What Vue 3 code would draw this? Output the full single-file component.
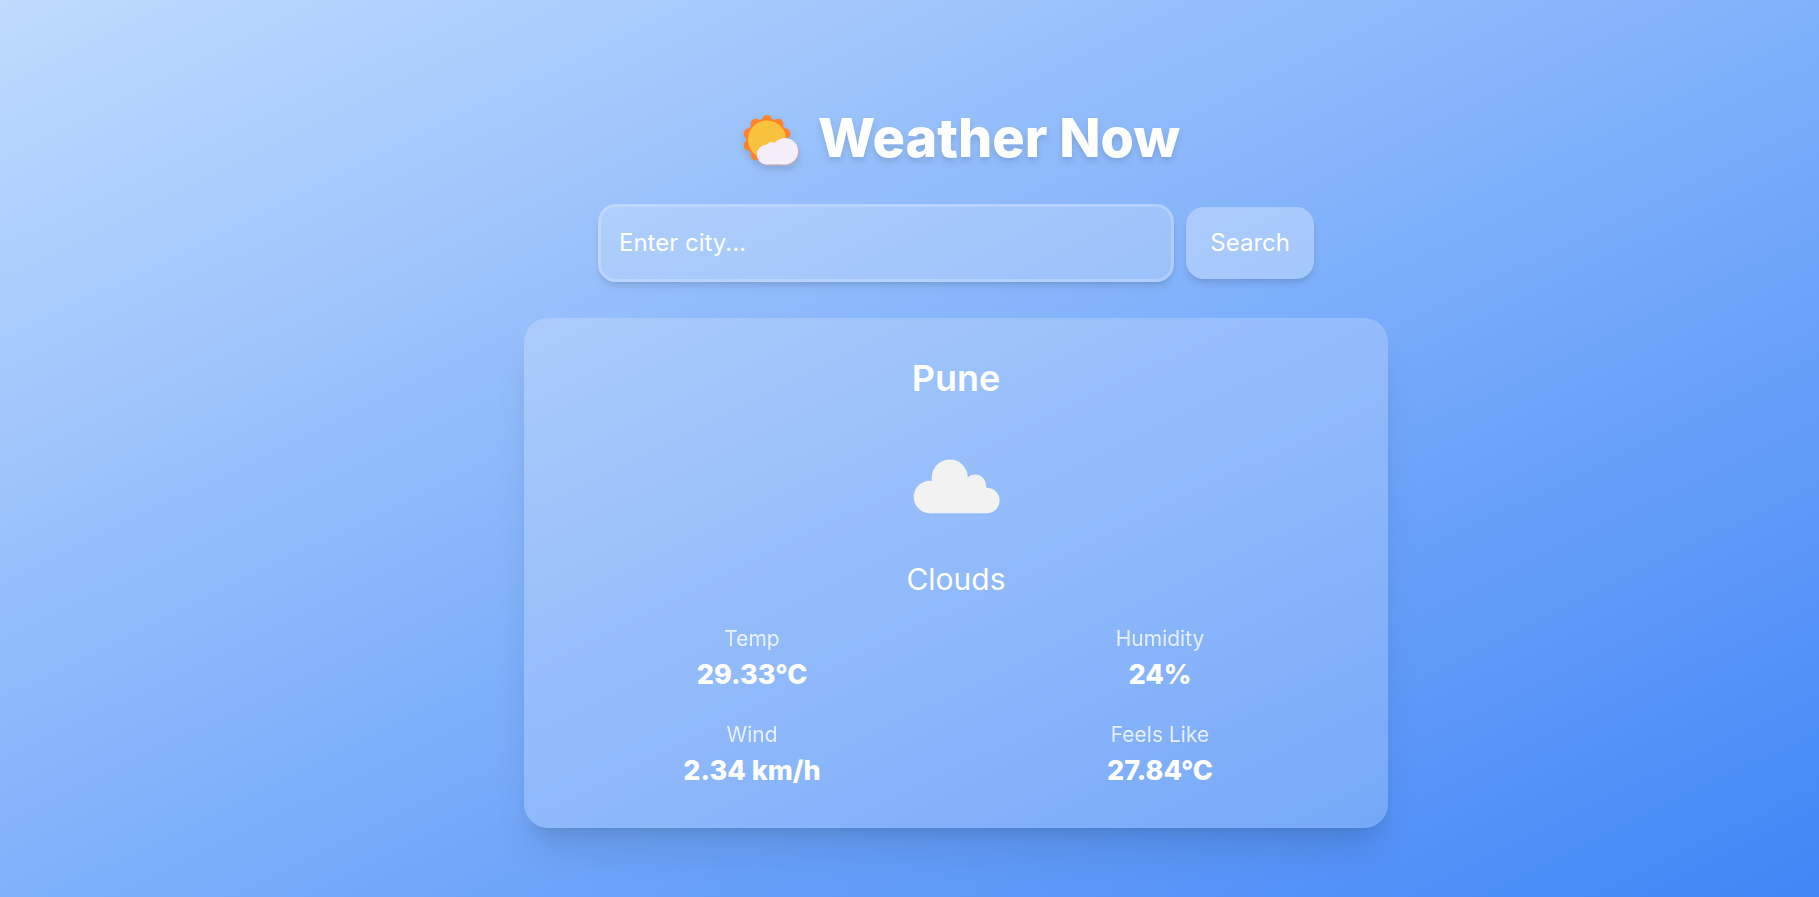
<script setup>
import { ref } from 'vue'

const city = ref('')
const weather = {
  city: 'Pune',
  condition: 'Clouds',
  stats: [
    { label: 'Temp', value: '29.33°C' },
    { label: 'Humidity', value: '24%' },
    { label: 'Wind', value: '2.34 km/h' },
    { label: 'Feels Like', value: '27.84°C' },
  ],
}
const rays = Array.from({ length: 10 }, (_, i) => i * 36)
</script>

<template>
  <main class="page">
    <h1 class="title">
      <svg class="logo" viewBox="0 0 70 60" aria-hidden="true">
        <g fill="#ff822d">
          <circle cx="35" cy="31.5" r="21" />
          <circle
            v-for="angle in rays"
            :key="angle"
            cx="35"
            cy="12.3"
            r="5.2"
            :transform="`rotate(${angle} 35 31.5)`"
          />
        </g>
        <circle cx="35" cy="31.5" r="19" fill="#f9c23c" />
        <g fill="#b8a9bd" transform="translate(0.8 0.8)">
          <circle cx="52.9" cy="43.5" r="13.6" />
          <circle cx="34.5" cy="47" r="10.1" />
          <rect x="34.5" y="43" width="18.400" height="14.1" />
        </g>
        <g fill="#f3eef8">
          <circle cx="52.9" cy="43.2" r="13.2" />
          <circle cx="34.5" cy="46.6" r="9.8" />
          <circle cx="39.6" cy="40.5" r="6.4" />
          <rect x="34.5" y="37" width="18.400" height="19.400" />
        </g>
      </svg>
      <span>Weather Now</span>
    </h1>

    <form class="search" @submit.prevent>
      <input v-model="city" class="field" type="text" aria-label="City" placeholder="Enter city..." />
      <button class="submit" type="submit">Search</button>
    </form>

    <section class="card">
      <h2 class="city">{{ weather.city }}</h2>
      <svg class="cloud" viewBox="0 0 150 150" role="img" aria-label="Clouds">
        <g fill="#f2f2f2">
          <circle cx="68.8" cy="69.5" r="18" />
          <circle cx="49" cy="89" r="16.3" />
          <circle cx="94.2" cy="77.200" r="10.7" />
          <circle cx="105.8" cy="92.5" r="12.8" />
          <rect x="49" y="79.7" width="57" height="25.6" />
          <rect x="50.8" y="69.5" width="36" height="14" />
          <rect x="84.5" y="76.5" width="20.4" height="8" />
        </g>
      </svg>
      <p class="condition">{{ weather.condition }}</p>
      <dl class="stats">
        <div v-for="stat in weather.stats" :key="stat.label">
          <dt>{{ stat.label }}</dt>
          <dd>{{ stat.value }}</dd>
        </div>
      </dl>
    </section>
  </main>
</template>

<style>
body {
  margin: 0;
}
</style>

<style scoped>
.page {
  box-sizing: border-box;
  min-height: 100vh;
  padding: 108px 0 69px 93px;
  display: flex;
  flex-direction: column;
  align-items: center;
  color: #fff;
  font-family: Inter, "Liberation Sans", sans-serif;
  background-image: linear-gradient(to bottom right, #bfdbfe, #3b82f6);
  background-size: calc(100% + 93px) calc(100% + 38px);
}

.title {
  margin: 0 0 36px;
  display: flex;
  align-items: center;
  gap: 16px;
  font-size: 54px;
  line-height: 60px;
  font-weight: 800;
  filter: drop-shadow(0 4px 3px rgba(0, 0, 0, 0.12));
}

.logo {
  width: 70px;
  height: 60px;
}

.search {
  width: 716px;
  max-width: 100%;
  margin-bottom: 36px;
  display: flex;
  align-items: center;
  gap: 12px;
}

.field,
.submit {
  box-sizing: border-box;
  border-radius: 18px;
  color: #fff;
  font-family: inherit;
  font-size: 24px;
  line-height: 36px;
  box-shadow: 0 6px 9px -2px rgba(0, 0, 0, 0.1), 0 3px 6px -3px rgba(0, 0, 0, 0.1);
}

.field {
  flex: 1;
  min-width: 0;
  height: 78px;
  padding: 17px 18px 19px;
  border: 3px solid rgba(255, 255, 255, 0.2);
  background: rgba(255, 255, 255, 0.2);
  outline: none;
}

.field::placeholder {
  color: #fff;
  opacity: 1;
}

.submit {
  padding: 18px 24px;
  border: 0;
  background: rgba(255, 255, 255, 0.3);
}

.card {
  box-sizing: border-box;
  width: 864px;
  max-width: 100%;
  padding: 36px;
  border-radius: 24px;
  text-align: center;
  background: rgba(255, 255, 255, 0.2);
  box-shadow: 0 30px 38px -8px rgba(0, 0, 0, 0.1), 0 12px 15px -9px rgba(0, 0, 0, 0.1);
}

.city {
  margin: 0;
  font-size: 36px;
  line-height: 48px;
  font-weight: 600;
}

.cloud {
  display: block;
  width: 150px;
  height: 150px;
  margin: 6px auto 0;
}

.condition {
  margin: 0 0 24px;
  font-size: 30px;
  line-height: 42px;
}

.stats {
  margin: 0;
  display: grid;
  grid-template-columns: 1fr 1fr;
  gap: 24px;
}

.stats dt {
  font-size: 21px;
  line-height: 30px;
  opacity: 0.8;
}

.stats dd {
  margin: 0;
  font-size: 27px;
  line-height: 42px;
  font-weight: 800;
}
</style>
